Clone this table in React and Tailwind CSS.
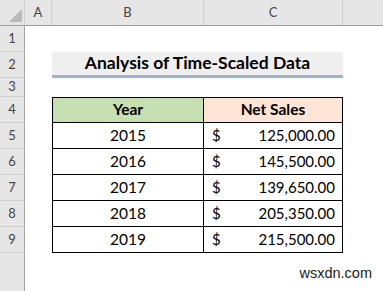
import React from "react";

const font = { fontFamily: "Lato, 'Open Sans', sans-serif" };

function RowHead({ n, h }) {
  return (
    <div className={`w-[25px] shrink-0 ${h} bg-[#e6e6e6] border-r border-r-[#a6a6a6] border-b border-b-[#d0d0d0] flex items-center justify-center text-[13px] text-[#444]`}>
      {n}
    </div>
  );
}

const data = [
  ["2015", "125,000.00"],
  ["2016", "145,500.00"],
  ["2017", "139,650.00"],
  ["2018", "205,350.00"],
  ["2019", "215,500.00"],
];

export default function App() {
  return (
    <div className="w-[383px] h-[291px] bg-white overflow-hidden relative" style={font}>
      {/* column header */}
      <div className="flex h-[26px] bg-[#e6e6e6] border-b border-b-[#9c9c9c] text-[13px] text-[#444]">
        <div className="w-[25px] shrink-0 border-r border-r-[#cfcfcf] relative">
          <svg className="absolute right-[2px] bottom-[3px]" width="13" height="13" viewBox="0 0 13 13">
            <polygon points="13,0 13,13 0,13" fill="#b9b9b9" />
          </svg>
        </div>
        <div className="w-[27px] shrink-0 border-r border-r-[#cfcfcf] flex items-center justify-center">A</div>
        <div className="w-[152px] shrink-0 border-r border-r-[#cfcfcf] flex items-center justify-center">B</div>
        <div className="w-[139px] shrink-0 border-r border-r-[#cfcfcf] flex items-center justify-center">C</div>
        <div className="flex-1" />
      </div>

      {/* row 1 */}
      <div className="flex">
        <RowHead n="1" h="h-[26px]" />
      </div>

      {/* row 2 title */}
      <div className="flex">
        <RowHead n="2" h="h-[26px]" />
        <div className="w-[27px] shrink-0" />
        <div className="w-[291px] shrink-0 h-[26px] bg-[#efefef] border-b-[3px] border-b-[#a0b1d6] flex items-center justify-center text-[17.5px] font-bold text-black">
          Analysis of Time-Scaled Data
        </div>
      </div>

      {/* row 3 */}
      <div className="flex">
        <RowHead n="3" h="h-[19px]" />
      </div>

      {/* row 4 table header */}
      <div className="flex">
        <RowHead n="4" h="h-[26px]" />
        <div className="w-[27px] shrink-0" />
        <div className="w-[152px] shrink-0 h-[26px] bg-[#c6e0b4] border border-black flex items-center justify-center text-[15.5px] font-bold text-black">
          Year
        </div>
        <div className="w-[139px] shrink-0 h-[26px] bg-[#fce4d6] border-y border-r border-black flex items-center justify-center text-[15.5px] font-bold text-black">
          Net Sales
        </div>
      </div>

      {data.map(([y, v], i) => (
        <div className="flex" key={y}>
          <RowHead n={String(i + 5)} h="h-[26px]" />
          <div className="w-[27px] shrink-0" />
          <div className="w-[152px] shrink-0 h-[26px] border-x border-b border-black flex items-center justify-center text-[15.5px] text-black">
            {y}
          </div>
          <div className="w-[139px] shrink-0 h-[26px] border-r border-b border-black flex items-center justify-between pl-[8px] pr-[7px] text-[15px] text-black">
            <span>$</span>
            <span>{v}</span>
          </div>
        </div>
      ))}

      <div className="flex h-[38px]">
        <div className="w-[25px] shrink-0 h-full bg-[#e6e6e6] border-r border-r-[#a6a6a6]" />
        <div className="flex-1 flex items-end justify-end pr-[11px] pb-[6px] text-[14.5px] text-[#222]" style={{ fontFamily: "'Liberation Sans', Arial, sans-serif" }}>
          wsxdn.com
        </div>
      </div>
    </div>
  );
}
